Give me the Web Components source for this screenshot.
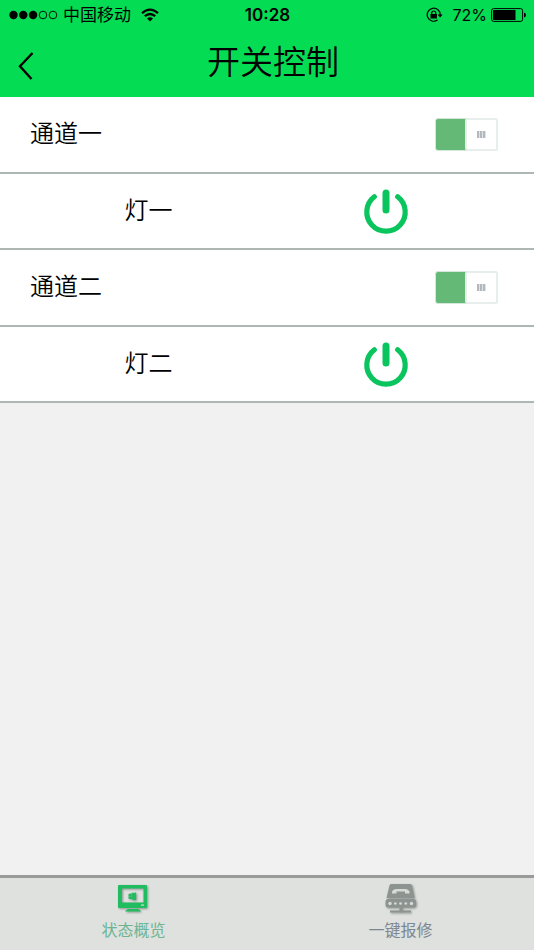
<!DOCTYPE html>
<html lang="zh-CN">
<head>
<meta charset="utf-8">
<meta name="viewport" content="width=device-width, initial-scale=1">
<title>开关控制</title>
<style>
html, body { margin: 0; min-height: 100%; }
body { background: #f1f1f1; color: #000; font-family: "Inter", "Noto Sans CJK SC", sans-serif; }
</style>
</head>
<body>
<switch-app></switch-app>
<script>
const define = (name, html, setup) => {
  const t = document.createElement('template');
  t.innerHTML = html;
  customElements.define(name, class extends HTMLElement {
    connectedCallback() {
      if (this.shadowRoot) return;
      this.attachShadow({ mode: 'open' }).append(t.content.cloneNode(true));
      if (setup) setup(this, this.shadowRoot);
    }
  });
};

define('status-bar', `
<style>
:host { display: grid; grid-template-columns: 1fr auto 1fr; align-items: center; height: 30px; padding: 0 8px 0 9px; font-size: 17px; line-height: 24px; }
.left, .right { display: flex; align-items: center; }
.left { gap: 5px; }
.wifi { margin-left: 5px; }
.right { justify-content: flex-end; gap: 4px; }
.right span { font-size: 16px; }
.lock { margin-right: 5px; }
.time { font-weight: 600; font-size: 17px; }
svg { display: block; }
</style>
<div class="left">
<svg width="49" height="10" viewBox="0 0 49 10"><circle cx="4.5" cy="5" r="4.2"/><circle cx="14.3" cy="5" r="4.2"/><circle cx="24.1" cy="5" r="4.2"/><g fill="none" stroke="#000" stroke-width=".9"><circle cx="34" cy="5" r="3.8"/><circle cx="44" cy="5" r="3.8"/></g></svg>
<span>中国移动</span>
<svg class="wifi" width="18" height="14" viewBox="0 0 18 14"><g fill="none" stroke="#000" stroke-width="2.2"><path d="M1 5.2Q9-1.800 17 5.200"/><path d="M3.800 8.200Q9 3.800 14.200 8.200"/></g><path d="M6 10.400Q9 8 12 10.400L9 13.400Z"/></svg>
</div>
<span class="time">10:28</span>
<div class="right">
<svg class="lock" width="17" height="16" viewBox="0 0 17 16"><g fill="none" stroke="#000" stroke-width="1.2"><path d="M14.200 8A6.500 6.500 0 1 0 11.500 13"/><path d="M5.700 7.600V6a2 2 0 0 1 4 0v1.600"/></g><path d="M4.500 7h6.400v4.600H4.500ZM11.500 7.400h5.200L14.100 10.600Z"/></svg>
<span>72%</span>
<svg width="35" height="14" viewBox="0 0 35 14"><rect x=".6" y=".6" width="31" height="12.800" rx="2" fill="none" stroke="#000"/><rect x="2" y="2" width="22.500" height="10"/><path d="M33 4.500q2 .5 2 2.500t-2 2.500Z"/></svg>
</div>`);

define('title-bar', `
<style>
:host { display: grid; grid-template-columns: 52px 1fr 40px; align-items: center; height: 67px; }
button { justify-self: start; display: flex; align-items: center; border: 0; padding: 4px 18px 0; margin: 0; height: 67px; background: none; cursor: pointer; }
h1 { margin: 0; text-align: center; font-size: 33px; line-height: 48px; font-weight: 350; padding-bottom: 3px; }
</style>
<button type="button" aria-label="返回"><svg width="16" height="28" viewBox="0 0 16 28"><path d="M14.500 1L2 14.200L13.500 27" fill="none" stroke="#000" stroke-width="2.400"/></svg></button>
<h1><slot></slot></h1>`);

define('channel-row', `
<style>
:host { display: block; background: #fff; border-bottom: 2px solid #afb7b3; }
label { display: flex; align-items: center; justify-content: space-between; box-sizing: border-box; height: 75px; padding: 0 36px 0 30px; font-size: 24px; line-height: 36px; font-weight: 350; }
span { padding-bottom: 2px; }
input { appearance: none; display: flex; box-sizing: border-box; width: 63px; height: 33px; margin: 0; border-radius: 3px; background: #63b975; border: 1px solid #d5e6da; justify-content: flex-end; cursor: pointer; }
input::after { content: ""; box-sizing: border-box; width: 33px; height: 33px; margin: -1px; border: 2px solid #e8eeeb; border-radius: 3px; background: repeating-linear-gradient(90deg, #b2b8bd 0 2px, #dfe3e6 2px 3px) center / 9px 7px no-repeat, #fff; }
input:not(:checked) { justify-content: flex-start; background: #ddd; }
</style>
<label><span><slot></slot></span><input type="checkbox" role="switch" checked></label>`);

define('lamp-row', `
<style>
:host { display: grid; grid-template-columns: 297fr 177fr 60fr; align-items: center; box-sizing: border-box; height: 76px; background: #fff; border-bottom: 2px solid #afb7b3; font-size: 24px; line-height: 36px; font-weight: 350; }
span { text-align: center; }
button { justify-self: center; border: 0; padding: 1px 0 0; background: none; cursor: pointer; }
svg { display: block; }
</style>
<span id="name"><slot></slot></span>
<button type="button" aria-labelledby="name" aria-pressed="true"><svg width="46" height="46" viewBox="0 0 46 46" fill="none" stroke="#0ac45d" stroke-linecap="round"><path d="M11.300 7.800A19.200 19.200 0 1 0 34.700 7.800" stroke-width="5.200"/><path d="M23 4V21" stroke-width="7"/></svg></button>`);

define('tab-item', `
<style>
:host { display: block; flex: 1; color: #7d8792; }
:host([active]) { color: #6bb594; }
a { display: flex; flex-direction: column; align-items: center; gap: 3px; padding: 5px 0 8px; color: inherit; text-decoration: none; font-size: 16px; line-height: 24px; }
</style>
<a href="#"><slot name="icon"></slot><slot></slot></a>`, (host, root) => {
  if (host.hasAttribute('active')) root.querySelector('a').setAttribute('aria-current', 'page');
});

define('switch-app', `
<style>
:host { display: flex; flex-direction: column; min-height: 100vh; }
header { background: #04dc54; }
main { flex: 1; }
nav { display: flex; background: #dfe1de; border-top: 3px solid #999b99; }
svg { display: block; filter: drop-shadow(1px 1px 1px #8a948e); }
</style>
<header><status-bar></status-bar><title-bar>开关控制</title-bar></header>
<main>
<channel-row>通道一</channel-row>
<lamp-row>灯一</lamp-row>
<channel-row>通道二</channel-row>
<lamp-row>灯二</lamp-row>
</main>
<nav>
<tab-item active>
<svg slot="icon" width="32" height="32" viewBox="0 0 32 32"><path fill="#20bd60" fill-rule="evenodd" d="M1 2H28Q29 2 29 3V24Q29 25 28 25H1Q0 25 0 24V3Q0 2 1 2ZM4 5.500V19.500H25.500V5.500Z"/><path fill="#d5ded7" d="M23 21.500h3v1.200h-3z"/><path fill="#20bd60" d="M10.500 11l3.300-.8v3H10.500zm3.600-1.500q2 1 4-.2v4.200H14.100zM10.500 13.500h3.300v2.700l-3.300-.5zm3.600 0h4v3.300q-2 1-4-.2zM10 26h10q2 .5 3 2.500H7Q8 26.500 10 26z"/></svg>
状态概览
</tab-item>
<tab-item>
<svg slot="icon" width="32" height="32" viewBox="0 0 32 32"><g fill="#8d9390"><path d="M6 1H25Q26.500 1 27 2.500L29.500 15H1.500L4.500 2.500Q5 1 6 1Z"/><path d="M2 16H29.500Q31 17 31 19V21Q31 24.500 28.500 24.500H3Q.5 24.500 .5 21V19Q.5 17 2 16Z"/><path d="M14.500 24h3v3.500h8.500v2H5v-2h9.500z"/></g><path d="M7 10.500V8.500Q8 6 11 6H20.500Q23.500 6 24.500 8.500V10.500H20V8.500H11.500V10.500Z" fill="#d7dbd8"/><g fill="#d7dbd8"><circle cx="5" cy="20.500" r="1.700"/><circle cx="10.300" cy="20.500" r="1.300"/><circle cx="15.500" cy="20.500" r="1.300"/><circle cx="20.800" cy="20.500" r="1.300"/><circle cx="26.500" cy="20.500" r="1.700"/></g></svg>
一键报修
</tab-item>
</nav>`);
</script>
</body>
</html>
